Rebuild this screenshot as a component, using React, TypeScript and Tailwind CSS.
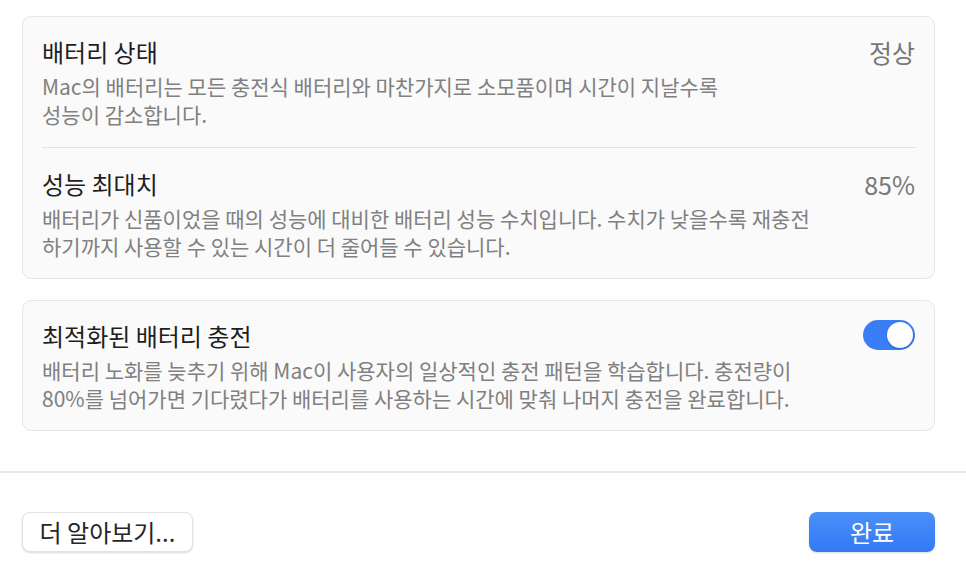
const font = "font-['Noto_Sans_CJK_KR','Noto_Sans',sans-serif]";

function Row({ title, value, lines }: { title: string; value: React.ReactNode; lines: string[] }) {
  return (
    <div className="flex items-start justify-between">
      <div className="flex flex-col gap-[6px]">
        <p className="text-[24px] leading-[28px] text-[#1e1e1e]">{title}</p>
        <p className="text-[21px] leading-[28px] text-[#808080]">
          {lines.map((l, i) => (
            <span key={i} className="block whitespace-nowrap">{l}</span>
          ))}
        </p>
      </div>
      {value}
    </div>
  );
}

function Value({ children }: { children: string }) {
  return <p className="text-[25px] leading-[28px] text-[#777]">{children}</p>;
}

function Toggle() {
  return (
    <div className="mt-[-2px] flex h-[30px] w-[52px] items-center justify-end rounded-full bg-[#3a7ef6] p-[2px]">
      <div className="size-[26px] rounded-full bg-white shadow-[0_1px_2px_rgba(0,0,0,0.25)]" />
    </div>
  );
}

export default function App() {
  return (
    <div className={`${font} flex h-[584px] w-[966px] flex-col bg-white`}>
      <div className="flex flex-col gap-[21px] pl-[22px] pr-[31px] pt-[16px]">
        <div className="flex h-[263px] flex-col rounded-[9px] border border-[#e6e6e6] bg-[#fafafa] px-[19px] pt-[21px]">
          <Row
            title="배터리 상태"
            value={<Value>정상</Value>}
            lines={["Mac의 배터리는 모든 충전식 배터리와 마찬가지로 소모품이며 시간이 지날수록", "성능이 감소합니다."]}
          />
          <div className="mt-[19px] mb-[22px] h-px bg-[#e3e3e3]" />
          <Row
            title="성능 최대치"
            value={<Value>85%</Value>}
            lines={[
              "배터리가 신품이었을 때의 성능에 대비한 배터리 성능 수치입니다. 수치가 낮을수록 재충전",
              "하기까지 사용할 수 있는 시간이 더 줄어들 수 있습니다.",
            ]}
          />
        </div>
        <div className="flex h-[131px] flex-col rounded-[9px] border border-[#e6e6e6] bg-[#fafafa] px-[19px] pt-[21px]">
          <Row
            title="최적화된 배터리 충전"
            value={<Toggle />}
            lines={[
              "배터리 노화를 늦추기 위해 Mac이 사용자의 일상적인 충전 패턴을 학습합니다. 충전량이",
              "80%를 넘어가면 기다렸다가 배터리를 사용하는 시간에 맞춰 나머지 충전을 완료합니다.",
            ]}
          />
        </div>
      </div>
      <div className="mt-[40px] h-[2px] bg-[#e8e8e8]" />
      <div className="flex items-center justify-between pl-[22px] pr-[31px] pt-[39px]">
        <button className="flex h-[40px] w-[171px] items-center justify-center rounded-[8px] border border-[#e2e2e2] bg-white text-[24px] text-[#262626] shadow-[0_1px_2px_rgba(0,0,0,0.15)]">
          더 알아보기...
        </button>
        <button className="flex h-[40px] w-[126px] items-center justify-center rounded-[8px] bg-gradient-to-b from-[#4b90f8] to-[#3279f5] text-[24px] text-white shadow-[0_1px_2px_rgba(0,0,0,0.15)]">
          완료
        </button>
      </div>
    </div>
  );
}
